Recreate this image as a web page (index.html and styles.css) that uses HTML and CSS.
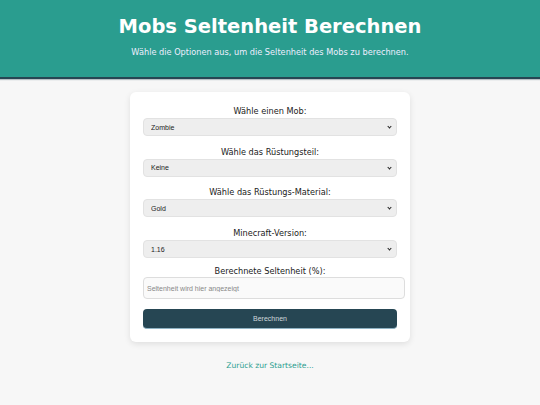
FILE: index.html
```html
<!DOCTYPE html>
<html lang="de">
<head>
    <meta charset="UTF-8">
    <meta name="viewport" content="width=device-width, initial-scale=1.0">
    <title>Mobs Seltenheit Berechnen</title>
    <link rel="stylesheet" href="styles.css">
</head>
<body>
    <header class="site-header">
        <h1>Mobs Seltenheit Berechnen</h1>
        <p>Wähle die Optionen aus, um die Seltenheit des Mobs zu berechnen.</p>
    </header>

    <main class="page">
        <form class="calc-card" onsubmit="return false;">
            <label for="mob">Wähle einen Mob:</label>
            <div class="select-wrap">
                <select id="mob">
                    <option>Zombie</option>
                    <option>Skelett</option>
                    <option>Creeper</option>
                </select>
            </div>

            <label for="piece">Wähle das Rüstungsteil:</label>
            <div class="select-wrap">
                <select id="piece">
                    <option>Keine</option>
                    <option>Helm</option>
                    <option>Brustpanzer</option>
                </select>
            </div>

            <label for="material">Wähle das Rüstungs-Material:</label>
            <div class="select-wrap">
                <select id="material">
                    <option>Gold</option>
                    <option>Eisen</option>
                    <option>Diamant</option>
                </select>
            </div>

            <label for="version">Minecraft-Version:</label>
            <div class="select-wrap">
                <select id="version">
                    <option>1.16</option>
                    <option>1.17</option>
                    <option>1.18</option>
                </select>
            </div>

            <label for="result" class="result-label">Berechnete Seltenheit (%):</label>
            <input type="text" id="result" placeholder="Seltenheit wird hier angezeigt" readonly>

            <button type="button">Berechnen</button>
        </form>

        <a class="back-link" href="#">Zurück zur Startseite...</a>
    </main>
</body>
</html>
```

FILE: styles.css
```css
body {
    margin: 0;
    font-family: "DejaVu Sans", Verdana, sans-serif;
    background-color: #f7f7f7;
    color: #222;
}

.site-header {
    background-color: #2a9d8f;
    color: #fff;
    text-align: center;
    padding: 15px 0 19px;
    border-bottom: 2px solid #264653;
    box-shadow: 0 1px 1px rgba(38, 70, 83, 0.3);
}

.site-header h1 {
    margin: 0;
    font-size: 19.5px;
    line-height: 24px;
}

.site-header p {
    margin: 7px 0 0;
    font-size: 8.2px;
    line-height: 12px;
    color: #eef;
}

.page {
    text-align: center;
    padding-top: 13px;
}

.calc-card {
    width: 254px;
    margin: 0 auto;
    padding: 13px;
    background-color: #fff;
    border-radius: 6px;
    box-shadow: 0 2px 6px rgba(0, 0, 0, 0.1);
    text-align: center;
}

.calc-card label {
    display: block;
    font-size: 8.2px;
    line-height: 12px;
    margin-bottom: 1px;
}

.calc-card .result-label {
    margin-top: -2.7px;
    margin-bottom: 0;
}

.select-wrap {
    position: relative;
    margin-bottom: 9.7px;
}

/* small chevron in place of the native arrow */
.select-wrap::after {
    content: "";
    position: absolute;
    right: 6px;
    top: 7px;
    width: 2px;
    height: 2px;
    border-right: 1px solid #222;
    border-bottom: 1px solid #222;
    transform: rotate(45deg);
    pointer-events: none;
}

.calc-card select {
    display: block;
    width: 100%;
    height: 18px;
    padding: 0 7px;
    font-family: "Liberation Sans", Arial, sans-serif;
    font-size: 7px;
    color: #222;
    background-color: #eee;
    border: 1px solid #e2e2e2;
    border-radius: 4px;
    appearance: none;
    -webkit-appearance: none;
}

.calc-card input[type="text"] {
    display: block;
    width: 100%;
    height: 20px;
    margin: 0 0 10px;
    padding: 0 3px;
    font-family: "Liberation Sans", Arial, sans-serif;
    font-size: 7px;
    background-color: #fafafa;
    border: 1px solid #ddd;
    border-radius: 4px;
}

.calc-card input::placeholder {
    color: #888;
}

.calc-card button {
    display: block;
    width: 100%;
    height: 20px;
    font-family: "Liberation Sans", Arial, sans-serif;
    font-size: 7px;
    color: #cfd8dc;
    background-color: #264653;
    border: none;
    border-bottom: 1px solid #8fb3c4;
    border-radius: 4px;
    cursor: pointer;
}

.back-link {
    display: inline-block;
    margin-top: 18px;
    font-size: 7.6px;
    line-height: 12px;
    color: #2a9d8f;
    text-decoration: none;
}
```
